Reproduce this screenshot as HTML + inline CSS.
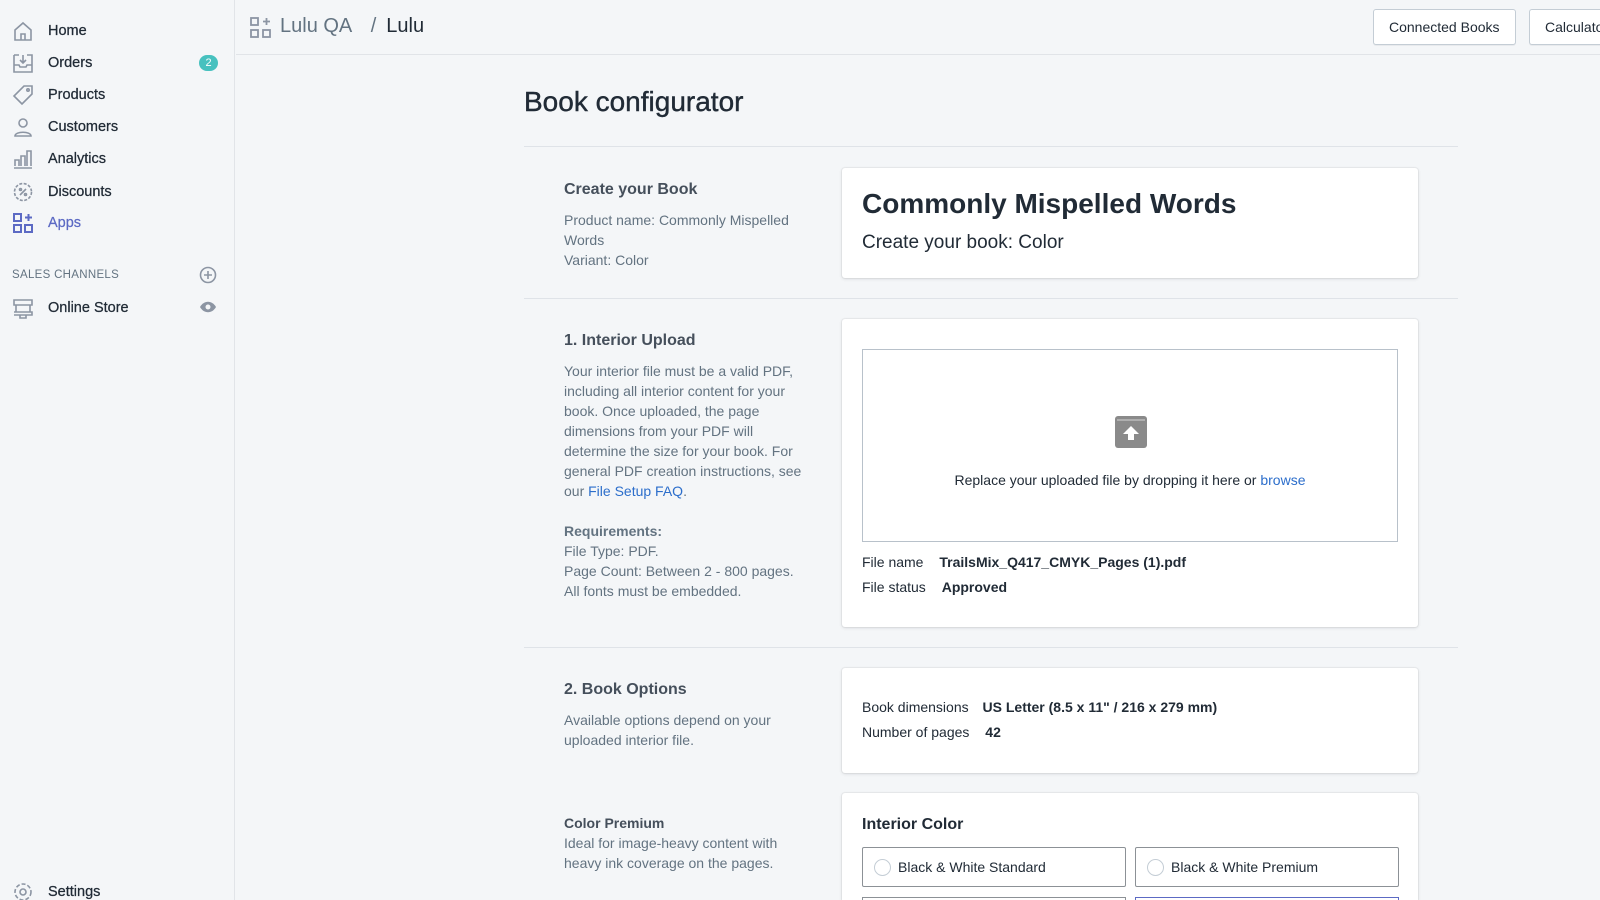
<!DOCTYPE html>
<html style="overflow:hidden;height:900px"><head><meta charset="utf-8"><style>
*{box-sizing:border-box;margin:0;padding:0}
body{width:1600px;height:900px;overflow:hidden;background:#f4f6f8;font-family:"Liberation Sans",sans-serif;color:#212b36;position:relative}
.side{position:absolute;left:0;top:0;width:235px;height:900px;background:#f4f6f8;border-right:1px solid #e1e4e8}
.nav{position:absolute;left:12px;display:flex;align-items:center;font-size:14.5px;color:#212b36;font-weight:500;-webkit-text-stroke:0.25px #212b36}
.nav svg{width:22px;height:22px;margin-right:14px}
.badge{position:absolute;left:199px;width:19px;height:16px;border-radius:8px;background:#47c1bf;color:#fff;font-size:11px;text-align:center;line-height:16px}
.top{position:absolute;left:236px;top:0;right:0;height:55px;border-bottom:1px solid #e1e4e8}
.btn{position:absolute;top:9px;height:36px;border:1px solid #c4cdd5;border-radius:3px;background:#fff;font-size:14px;line-height:34px;padding:0 15px;color:#212b36;box-shadow:0 1px 0 rgba(22,29,37,.05);overflow:hidden;white-space:nowrap}
.hr{position:absolute;left:524px;width:934px;height:1px;background:#dfe3e8}
.lt{position:absolute;left:564px;width:250px;font-size:14px;line-height:20px;color:#637381}
.lt h3{font-size:16px;font-weight:600;color:#454f5b;margin-bottom:10px}
.card{position:absolute;left:842px;width:576px;background:#fff;border-radius:3px;box-shadow:0 0 0 1px rgba(63,63,68,.05),0 1px 3px rgba(63,63,68,.15)}
.kv{font-size:14px;color:#212b36;line-height:25px}
.kv b{font-weight:600;margin-left:10px}
a{color:#2c6ecb;text-decoration:none}
.opt{position:absolute;top:54px;width:264px;height:40px;border:1px solid #8c9196;border-radius:2px;font-size:14px;line-height:38px;padding-left:35px}
.opt:before{content:"";position:absolute;left:11px;top:11px;width:15px;height:15px;border:1px solid #c4cdd5;border-radius:50%}
</style></head><body>
<div class="side">
 <div class="nav" style="top:20px"><svg viewBox="0 0 22 22" fill="none" stroke="#8c95a3" stroke-width="1.6"><path d="M3 10L11 3l8 7v10H3z M9 20v-6h4v6"/></svg>Home</div>
 <div class="nav" style="top:52px"><svg viewBox="0 0 22 22" fill="none" stroke="#8c95a3" stroke-width="1.6"><path d="M2 3h5M15 3h5v17H2V3M2 13h5l1 2h6l1-2h5M11 3v8M8 8l3 3 3-3"/></svg>Orders</div>
 <div class="badge" style="top:55px">2</div>
 <div class="nav" style="top:84px"><svg viewBox="0 0 22 22" fill="none" stroke="#8c95a3" stroke-width="1.6"><path d="M12 2h8v8L10 20 2 12z"/><circle cx="16" cy="6" r="1.2"/></svg>Products</div>
 <div class="nav" style="top:116px"><svg viewBox="0 0 22 22" fill="none" stroke="#8c95a3" stroke-width="1.6"><circle cx="11" cy="7" r="4"/><path d="M3 20c0-5 16-5 16 0z"/></svg>Customers</div>
 <div class="nav" style="top:148px"><svg viewBox="0 0 22 22" fill="none" stroke="#8c95a3" stroke-width="1.6"><path d="M2 20h18M3 18v-6h4v6M9 18V8h4v10M15 18V3h4v15"/></svg>Analytics</div>
 <div class="nav" style="top:181px"><svg viewBox="0 0 22 22" fill="none" stroke="#8c95a3" stroke-width="1.6"><circle cx="11" cy="11" r="8.5" stroke-dasharray="3 1.5"/><path d="M8 14l6-6"/><circle cx="8.5" cy="8.5" r="1"/><circle cx="13.5" cy="13.5" r="1"/></svg>Discounts</div>
 <div class="nav" style="top:212px;color:#5c6ac4;-webkit-text-stroke:0.25px #5c6ac4"><svg viewBox="0 0 22 22" fill="none" stroke="#5c6ac4" stroke-width="2"><rect x="2" y="2" width="7" height="7"/><rect x="2" y="13" width="7" height="7"/><rect x="13" y="13" width="7" height="7"/><path d="M16.5 2v7M13 5.5h7"/></svg>Apps</div>
 <div style="position:absolute;left:12px;top:269px;font-size:11.5px;color:#637381;letter-spacing:.3px">SALES CHANNELS</div>
 <svg style="position:absolute;left:199px;top:266px" width="18" height="18" viewBox="0 0 18 18" fill="none" stroke="#8c95a3" stroke-width="1.6"><circle cx="9" cy="9" r="7.5"/><path d="M9 5v8M5 9h8"/></svg>
 <div class="nav" style="top:297px"><svg viewBox="0 0 22 22" fill="none" stroke="#8c95a3" stroke-width="1.6"><path d="M2 3h18v5H2zM4 8v7h14V8M2 15h18v3H2M8 18v3h6v-3"/></svg>Online Store</div>
 <svg style="position:absolute;left:199px;top:300px" width="18" height="14" viewBox="0 0 18 14"><path d="M1 7c4-7 12-7 16 0-4 7-12 7-16 0z" fill="#8c95a3"/><circle cx="9" cy="7" r="2.5" fill="#f4f6f8"/></svg>
 <div class="nav" style="top:881px"><svg viewBox="0 0 22 22" fill="none" stroke="#8c95a3" stroke-width="1.6"><circle cx="11" cy="11" r="3"/><circle cx="11" cy="11" r="8" stroke-dasharray="4 2"/></svg>Settings</div>
</div>
<div class="top">
 <svg style="position:absolute;left:14px;top:17px" width="21" height="21" viewBox="0 0 21 21" fill="none" stroke="#8c95a3" stroke-width="1.8"><rect x="1" y="1" width="7" height="7"/><rect x="1" y="13" width="7" height="7"/><rect x="13" y="13" width="7" height="7"/><path d="M16.5 1v7M13 4.5h7"/></svg>
 <div style="position:absolute;left:44px;top:15px;font-size:20px;color:#637381">Lulu QA <span style="margin:0 10px 0 14px">/</span><span style="color:#212b36">Lulu</span></div>
</div>
<div class="btn" style="left:1373px">Connected Books</div>
<div class="btn" style="left:1529px;width:71px;border-right:none;border-radius:3px 0 0 3px">Calculator</div>

<div style="position:absolute;left:524px;top:86px;font-size:28px;font-weight:500;color:#212b36;-webkit-text-stroke:0.4px #212b36">Book configurator</div>
<div class="hr" style="top:146px"></div>

<div class="lt" style="top:180px"><h3>Create your Book</h3>Product name: Commonly Mispelled Words<br>Variant: Color</div>
<div class="card" style="top:168px;height:110px;padding:20px">
 <div style="font-size:28px;font-weight:600;color:#212b36">Commonly Mispelled Words</div>
 <div style="font-size:19px;margin-top:12px">Create your book: Color</div>
</div>
<div class="hr" style="top:298px"></div>

<div class="lt" style="top:331px"><h3>1. Interior Upload</h3>Your interior file must be a valid PDF, including all interior content for your book. Once uploaded, the page dimensions from your PDF will determine the size for your book. For general PDF creation instructions, see our <a>File Setup FAQ</a>.<br><br><b style="font-weight:600">Requirements:</b><br>File Type: PDF.<br>Page Count: Between 2 - 800 pages.<br>All fonts must be embedded.</div>
<div class="card" style="top:319px;height:308px">
 <div style="position:absolute;left:20px;top:30px;width:536px;height:193px;border:1px solid #b8c1ca">
  <svg style="position:absolute;left:251px;top:65px" width="34" height="34" viewBox="0 0 34 34"><rect x="1" y="1" width="32" height="32" rx="3" fill="#8a8a8a"/><path d="M3 5h28" stroke="#bbb" stroke-width="1.5"/><path d="M17 11l-8 8h5v6h6v-6h5z" fill="#fff"/></svg>
  <div style="position:absolute;top:122px;width:100%;text-align:center;font-size:14px">Replace your uploaded file by dropping it here or <a>browse</a></div>
 </div>
 <div class="kv" style="position:absolute;left:20px;top:231px">File name <b style="margin-left:12px">TrailsMix_Q417_CMYK_Pages (1).pdf</b><br>File status <b style="margin-left:12px">Approved</b></div>
</div>
<div class="hr" style="top:647px"></div>

<div class="lt" style="top:680px"><h3>2. Book Options</h3>Available options depend on your uploaded interior file.</div>
<div class="card" style="top:668px;height:105px">
 <div class="kv" style="position:absolute;left:20px;top:27px">Book dimensions <b>US Letter (8.5 x 11" / 216 x 279 mm)</b><br>Number of pages <b style="margin-left:12px">42</b></div>
</div>

<div class="lt" style="top:813px"><b style="font-weight:600;color:#454f5b">Color Premium</b><br>Ideal for image-heavy content with heavy ink coverage on the pages.</div>
<div class="card" style="top:793px;height:107px;overflow:hidden;border-radius:3px 3px 0 0">
 <div style="position:absolute;left:20px;top:23px;font-size:16px;font-weight:600">Interior Color</div>
 <div class="opt" style="left:20px">Black &amp; White Standard</div>
 <div class="opt" style="left:293px">Black &amp; White Premium</div>
 <div style="position:absolute;left:20px;top:104px;width:264px;height:40px;border:1px solid #8c9196"></div>
 <div style="position:absolute;left:293px;top:104px;width:264px;height:40px;border:1px solid #5c6ac4"></div>
</div>
</body></html>
